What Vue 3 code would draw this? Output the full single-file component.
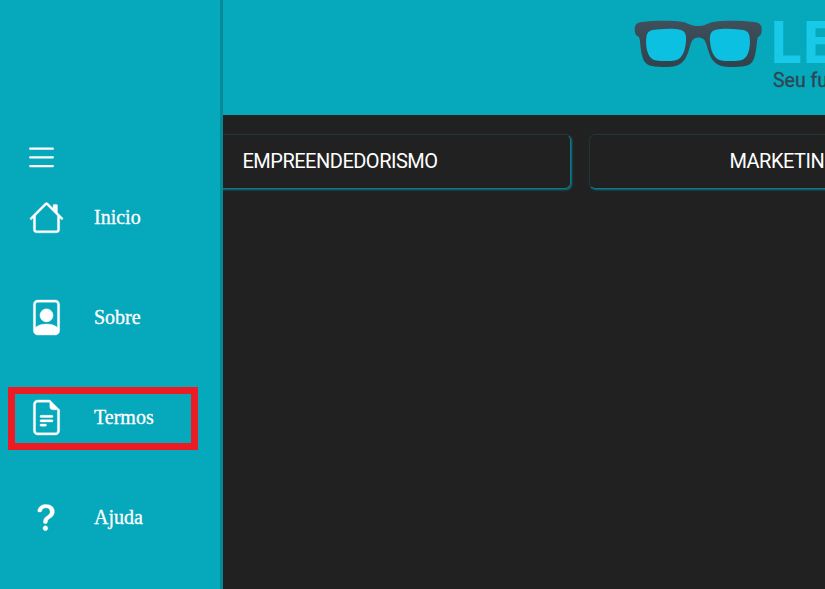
<script setup>
const items = [
  {
    label: 'Inicio',
    paths: [
      'M2 13.5V7h1v6.5a.5.5 0 0 0 .5.5h9a.5.5 0 0 0 .5-.5V7h1v6.5a1.5 1.5 0 0 1-1.5 1.5h-9A1.5 1.5 0 0 1 2 13.5zm11-11V6l-2-2V2.5a.5.5 0 0 1 .5-.5h1a.5.5 0 0 1 .5.5z',
      'M7.293 1.5a1 1 0 0 1 1.414 0l6.647 6.646a.5.5 0 0 1-.708.708L8 2.207 1.354 8.854a.5.5 0 1 1-.708-.708L7.293 1.5z',
    ],
  },
  {
    label: 'Sobre',
    paths: [
      'M12 1a1 1 0 0 1 1 1v10.755S12 11 8 11s-5 1.755-5 1.755V2a1 1 0 0 1 1-1h8zM4 0a2 2 0 0 0-2 2v12a2 2 0 0 0 2 2h8a2 2 0 0 0 2-2V2a2 2 0 0 0-2-2H4z',
      'M8 10a3 3 0 1 0 0-6 3 3 0 0 0 0 6z',
    ],
  },
  {
    label: 'Termos',
    marked: true,
    paths: [
      'M4 0h5.5v1H4a1 1 0 0 0-1 1v12a1 1 0 0 0 1 1h8a1 1 0 0 0 1-1V4.5h1V14a2 2 0 0 1-2 2H4a2 2 0 0 1-2-2V2a2 2 0 0 1 2-2z',
      'M9.5 3V0L14 4.5h-3A1.5 1.5 0 0 1 9.5 3z',
      'M5.5 7a.5.5 0 0 0 0 1h5a.5.5 0 0 0 0-1h-5zM5 9.5a.5.5 0 0 1 .5-.5h5a.5.5 0 0 1 0 1h-5a.5.5 0 0 1-.5-.5zm0 2a.5.5 0 0 1 .5-.5h2a.5.5 0 0 1 0 1h-2a.5.5 0 0 1-.5-.5z',
    ],
  },
  {
    label: 'Ajuda',
    paths: [
      'M4.475 5.458c-.284 0-.514-.237-.47-.517C4.28 3.24 5.576 2 7.825 2c2.25 0 3.767 1.36 3.767 3.215 0 1.344-.665 2.288-1.79 2.973-1.1.659-1.414 1.118-1.414 2.01v.03a.5.5 0 0 1-.5.5h-.77a.5.5 0 0 1-.5-.495l-.003-.2c-.043-1.221.477-2.001 1.645-2.712 1.03-.632 1.397-1.135 1.397-2.028 0-.979-.758-1.698-1.926-1.698-1.009 0-1.71.529-1.938 1.402-.066.254-.278.461-.54.461h-.777ZM7.496 14c.622 0 1.095-.474 1.095-1.09 0-.618-.473-1.092-1.095-1.092-.606 0-1.087.474-1.087 1.091S6.89 14 7.496 14Z',
    ],
  },
]
const categories = ['EMPREENDEDORISMO', 'MARKETING DIGITAL']
</script>

<template>
  <div class="page">
    <header class="header">
      <svg class="glasses" viewBox="0 0 130 50" width="130" height="50">
        <defs>
          <linearGradient id="frame" x1="0" y1="0" x2="0" y2="1">
            <stop offset="0" stop-color="#3f4f5b" />
            <stop offset="1" stop-color="#30434d" />
          </linearGradient>
        </defs>
        <path
          fill="url(#frame)"
          d="M9 2C20 .4 42 .2 50 2C56 3.500 58 6 65 6S74 3.500 80 2C88 .2 110 .4 121 2C127 2.800 129 5 128.700 10C128.500 14 128 15.500 125 17C123.500 20 124 29 121.500 37C119.500 44.500 115 46.200 106 46.800C95 47.600 86 47 81 41.500C76 36.500 75 28 72.500 22C71 18.500 68.500 17.500 65.500 17.500S60 18.500 58.500 22C56 28 55 36.500 50 41.500C45 47 36 47.600 25 46.800C16 46.200 11.500 44.500 9.500 37C7 29 7.500 20 6 17C3 15.500 2 14 1.700 10C1.500 5 3 2.800 9 2Z"
        />
        <path
          fill="#0cc0e2"
          d="M24 9.500C33 8.600 41 8.500 47 9.800C52 11.200 53.500 14 53 21C52.500 28 51 33.500 47.500 37.500C44 41.200 39 41 31 41C23 41 18.500 40.500 15.500 34.500C13 29 12.500 22 13.500 16C14.500 11.500 17 10 24 9.500Z"
        />
        <path
          fill="#0cc0e2"
          d="M106 9.500C97 8.600 89 8.500 83 9.800C78 11.200 76.500 14 77 21C77.500 28 79 33.500 82.500 37.500C86 41.200 91 41 99 41C107 41 111.500 40.500 114.500 34.500C117 29 117.500 22 116.500 16C115.500 11.500 113 10 106 9.500Z"
        />
      </svg>
      <div class="brand">
        <span class="brand-name">LE</span>
        <span class="brand-tag">Seu futuro</span>
      </div>
    </header>
    <main class="categories">
      <a v-for="c in categories" :key="c" class="category">{{ c }}</a>
    </main>
    <aside class="sidebar">
      <svg class="toggle" viewBox="0 0 26 22" width="26" height="22">
        <path d="M1.200 1.700h22.600M1.200 10.400h22.600M1.200 19.100h22.600" />
      </svg>
      <nav class="menu">
        <a v-for="item in items" :key="item.label" class="item" :class="{ marked: item.marked }">
          <svg class="icon" viewBox="0 0 16 16" width="35" height="35">
            <path v-for="p in item.paths" :key="p" :d="p" />
          </svg>
          <span class="label">{{ item.label }}</span>
        </a>
      </nav>
    </aside>
  </div>
</template>

<style>
body {
  background: #212121;
  overflow: hidden;
}
</style>

<style scoped>
.page {
  height: 100vh;
  overflow: hidden;
  background: #212121;
}
.header {
  display: flex;
  align-items: flex-start;
  box-sizing: border-box;
  height: 115px;
  padding: 20px 0 0 633px;
  background: #06a8bc;
}
.glasses {
  flex: none;
}
.brand {
  display: flex;
  flex-direction: column;
  flex: none;
  padding-left: 6px;
  white-space: nowrap;
}
.brand-name {
  font: 700 59px/41px "Open Sans", sans-serif;
  letter-spacing: -1px;
  color: #18cae8;
}
.brand-tag {
  padding: 6px 0 0 4px;
  font: 400 19.5px/28px Roboto, sans-serif;
  -webkit-text-stroke: 0.4px #2d4854;
  color: #2d4854;
}
.categories {
  display: flex;
  gap: 18px;
  padding: 19px 0 0 109px;
}
.category {
  display: flex;
  flex: none;
  align-items: center;
  justify-content: center;
  box-sizing: border-box;
  width: 462px;
  height: 55px;
  padding-bottom: 2px;
  border: 1px solid;
  border-color: #1d3639 #087c89 #087c89 #1d3639;
  border-radius: 6px;
  box-shadow: 1px 1px 2px rgba(6, 168, 188, 0.6);
  font: 400 20px/24px Roboto, sans-serif;
  letter-spacing: -0.5px;
  color: #fff;
}
.sidebar {
  position: fixed;
  inset: 0 auto 0 0;
  box-sizing: border-box;
  width: 223px;
  padding-top: 147px;
  border-right: 3px solid #058a98;
  background: #06a8bc;
}
.toggle {
  display: block;
  margin-left: 29px;
  fill: none;
  stroke: #fff;
  stroke-width: 2.3;
  stroke-linecap: round;
}
.menu {
  display: flex;
  flex-direction: column;
  gap: 37px;
  padding: 18px 22px 0 8px;
}
.item {
  display: flex;
  align-items: flex-start;
  gap: 30px;
  box-sizing: border-box;
  height: 63px;
  border: 7px solid transparent;
  padding: 6px 0 0 14px;
  font: 20px/24px "Liberation Serif", serif;
  color: #fff;
}
.label {
  padding-top: 5px;
  -webkit-text-stroke: 0.3px #fff;
}
.marked {
  border-color: #ed1c24;
}
.icon {
  flex: none;
  overflow: visible;
  fill: #fff;
  stroke: #fff;
  stroke-width: 0.18;
}
</style>
